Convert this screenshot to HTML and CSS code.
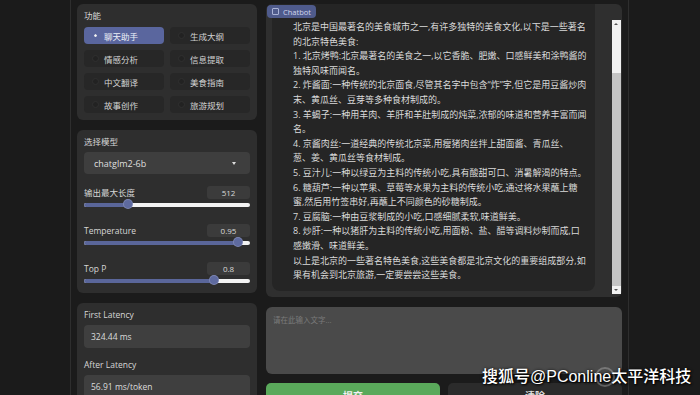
FILE: index.html
```html
<!DOCTYPE html>
<html lang="zh-CN">
<head>
  <meta charset="UTF-8" />
  <meta name="viewport" content="width=device-width, initial-scale=1.0"/>
  <title>ChatGLM2-6B</title>
  <link rel="stylesheet" href="styles.css">
</head>
<body>

  <div class="frame">
    <div class="side">

      <div class="panel">
        <div class="label">功能</div>
        <div class="radio-grid">
          <div class="radio selected"><span class="dot"></span>聊天助手</div>
          <div class="radio"><span class="dot"></span>生成大纲</div>
          <div class="radio"><span class="dot"></span>情感分析</div>
          <div class="radio"><span class="dot"></span>信息提取</div>
          <div class="radio"><span class="dot"></span>中文翻译</div>
          <div class="radio"><span class="dot"></span>美食指南</div>
          <div class="radio"><span class="dot"></span>故事创作</div>
          <div class="radio"><span class="dot"></span>旅游规划</div>
        </div>
      </div>

      <div class="panel model-panel">
        <div class="label">选择模型</div>
        <div class="dropdown">
          <span>chatglm2-6b</span>
          <span class="caret"></span>
        </div>

        <div class="slider-block">
          <div class="field-row">
            <span class="label">输出最大长度</span>
            <span class="num">512</span>
          </div>
          <div class="slider"><div class="fill" style="width: 26.5%"></div></div>
        </div>

        <div class="slider-block">
          <div class="field-row">
            <span class="label">Temperature</span>
            <span class="num">0.95</span>
          </div>
          <div class="slider"><div class="fill" style="width: 93%"></div></div>
        </div>

        <div class="slider-block">
          <div class="field-row">
            <span class="label">Top P</span>
            <span class="num">0.8</span>
          </div>
          <div class="slider"><div class="fill" style="width: 78.5%"></div></div>
        </div>
      </div>

      <div class="panel latency-panel">
        <div class="label">First Latency</div>
        <div class="value-box">324.44 ms</div>
        <div class="label second">After Latency</div>
        <div class="value-box">56.91 ms/token</div>
      </div>

    </div>

    <div class="main">
      <div class="chatbot">
        <div class="chat-tag"><span class="tag-icon"></span>Chatbot</div>
        <div class="messages">
          <div class="bubble">
            <p>北京是中国最著名的美食城市之一,有许多独特的美食文化,以下是一些著名<br>的北京特色美食:</p>
            <p>1. 北京烤鸭:北京最著名的美食之一,以它香脆、肥嫩、口感鲜美和涂鸭酱的<br>独特风味而闻名。</p>
            <p>2. 炸酱面:一种传统的北京面食,尽管其名字中包含“炸”字,但它是用豆酱炒肉<br>末、黄瓜丝、豆芽等多种食材制成的。</p>
            <p>3. 羊蝎子:一种用羊肉、羊肝和羊肚制成的炖菜,浓郁的味道和营养丰富而闻<br>名。</p>
            <p>4. 京酱肉丝:一道经典的传统北京菜,用瘦猪肉丝拌上甜面酱、青瓜丝、<br>葱、姜、黄瓜丝等食材制成。</p>
            <p>5. 豆汁儿:一种以绿豆为主料的传统小吃,具有酸甜可口、消暑解渴的特点。</p>
            <p>6. 糖葫芦:一种以苹果、草莓等水果为主料的传统小吃,通过将水果蘸上糖<br>蜜,然后用竹签串好,再蘸上不同颜色的砂糖制成。</p>
            <p>7. 豆腐脑:一种由豆浆制成的小吃,口感细腻柔软,味道鲜美。</p>
            <p>8. 炒肝:一种以猪肝为主料的传统小吃,用面粉、盐、醋等调料炒制而成,口<br>感嫩滑、味道鲜美。</p>
            <p>以上是北京的一些著名特色美食,这些美食都是北京文化的重要组成部分,如<br>果有机会到北京旅游,一定要尝尝这些美食。</p>
          </div>
        </div>
        <div class="scrollbar">
          <div class="sb-arrow up"></div>
          <div class="sb-track"></div>
          <div class="sb-thumb"></div>
          <div class="sb-arrow down"></div>
        </div>
      </div>

      <textarea class="input" placeholder="请在此输入文字..."></textarea>

      <div class="buttons">
        <button class="submit">提交</button>
        <button class="clear">清除</button>
      </div>
    </div>
  </div>

  <div class="watermark">
    <svg class="wm-logo" width="22" height="22" viewBox="0 0 22 22">
      <circle cx="11" cy="11" r="9" fill="none" stroke="rgba(255,255,255,0.25)" stroke-width="2"/>
    </svg>
    搜狐号@PConline太平洋科技
  </div>

</body>
</html>
```

FILE: styles.css
```css
body {
  margin: 0;
  background: #1b1b1b;
  font-family: "Open Sans", "Noto Sans CJK SC", sans-serif;
  color: #dcdcdc;
  width: 700px;
  height: 395px;
  overflow: hidden;
  position: relative;
}
.frame {
  margin-left: 70px;
  width: 545px;
  height: 395px;
  padding: 4px 6px 0 6px;
  border-left: 1px solid #2e2e2e;
  border-right: 1px solid #2e2e2e;
  display: flex;
  gap: 9px;
  box-sizing: content-box;
}
.side {
  width: 180px;
  flex: none;
  display: flex;
  flex-direction: column;
  gap: 10px;
}
.panel {
  background: #2e2e2e;
  border-radius: 6px;
  padding: 7px 7px 7px 7px;
}
.label {
  font-size: 8.5px;
  line-height: 10px;
  color: #d6d6d6;
}
.radio-grid {
  margin-top: 6px;
  display: grid;
  grid-template-columns: 1fr 1fr;
  gap: 6px;
}
.radio {
  height: 17px;
  background: #272727;
  border-radius: 4px;
  display: flex;
  align-items: center;
  gap: 5px;
  padding-left: 8px;
  font-size: 8.5px;
  color: #d2d2d2;
}
.radio .dot {
  width: 7px;
  height: 7px;
  border-radius: 50%;
  background: #222;
  box-sizing: border-box;
  border: 1px solid #303030;
}
.radio.selected {
  background: #5a669e;
  color: #eef0f8;
}
.radio.selected .dot {
  background: #5a669e;
  border: 2px solid #5a669e;
  box-shadow: inset 0 0 0 2px #f4f4f4;
}
.model-panel {
  padding-bottom: 10px;
}
.dropdown {
  margin-top: 5px;
  height: 22px;
  background: #3e3e3e;
  border-radius: 4px;
  display: flex;
  align-items: center;
  justify-content: space-between;
  padding: 0 14px 0 10px;
  font-size: 9px;
  color: #dedede;
}
.caret {
  width: 0;
  height: 0;
  border-left: 2px solid transparent;
  border-right: 2px solid transparent;
  border-top: 3px solid #ddd;
}
.slider-block {
  margin-top: 12px;
}
.slider-block + .slider-block {
  margin-top: 17px;
}
.field-row {
  display: flex;
  justify-content: space-between;
  align-items: center;
  height: 13px;
}
.num {
  width: 43px;
  height: 13px;
  line-height: 13px;
  background: #3b3b3b;
  border-radius: 3px;
  text-align: center;
  font-size: 8px;
  color: #d8d8d8;
}
.slider {
  margin-top: 4px;
  height: 4px;
  background: #f3f3f3;
  border-radius: 2px;
  position: relative;
}
.fill {
  height: 4px;
  background: #5a669a;
  border-radius: 2px;
  position: relative;
}
.fill::after {
  content: "";
  position: absolute;
  right: -4px;
  top: -3px;
  width: 8px;
  height: 8px;
  border-radius: 50%;
  background: #5e6a9f;
  box-shadow: 0 0 0 1px #7c86b4;
}
.latency-panel {
  flex: 1;
  border-radius: 6px 6px 0 0;
}
.value-box {
  margin-top: 5px;
  height: 23px;
  line-height: 23px;
  background: #3f3f3f;
  border-radius: 4px;
  padding-left: 7px;
  font-size: 8.5px;
  color: #dcdcdc;
}
.label.second {
  margin-top: 12px;
}
.main {
  width: 356px;
  flex: none;
  display: flex;
  flex-direction: column;
}
.chatbot {
  height: 293px;
  flex: none;
  background: #2f2f2f;
  border-radius: 6px;
  position: relative;
  display: flex;
  overflow: hidden;
}
.chat-tag {
  position: absolute;
  left: 1px;
  top: 1px;
  height: 13px;
  padding: 0 5px 0 5px;
  background: #4f5b8c;
  border-radius: 4px;
  display: flex;
  align-items: center;
  gap: 4px;
  font-size: 7.5px;
  color: #cfd5ec;
}
.tag-icon {
  width: 5px;
  height: 5px;
  border: 1px solid #aab3d6;
  border-radius: 1px;
}
.messages {
  flex: 1;
  padding: 0 17px 0 6px;
}
.bubble {
  background: #252525;
  border-radius: 0 0 8px 8px;
  padding: 16px 0 8px 21px;
  font-size: 9px;
  line-height: 14.6px;
  color: #dadada;
  white-space: nowrap;
}
.bubble p {
  margin: 0;
}
.scrollbar {
  width: 9px;
  margin: 16px 1px 3px 0;
  display: flex;
  flex-direction: column;
  background: #c6c6c6;
}
.sb-arrow {
  height: 8px;
  background: #f1f1f1;
  position: relative;
}
.sb-arrow::after {
  content: "";
  position: absolute;
  left: 2px;
  top: 3px;
  border-left: 2.5px solid transparent;
  border-right: 2.5px solid transparent;
}
.sb-arrow.up::after {
  border-bottom: 2px solid #555;
}
.sb-arrow.down::after {
  border-top: 2px solid #555;
}
.sb-track {
  height: 45px;
  background: #f1f1f1;
}
.sb-thumb {
  flex: 1;
  background: #c4c4c4;
}
.input {
  margin-top: 10px;
  height: 67px;
  flex: none;
  background: #4a4a4a;
  border: none;
  border-radius: 6px;
  padding: 7px 7px;
  box-sizing: border-box;
  resize: none;
  font-family: "Open Sans", "Noto Sans CJK SC", sans-serif;
  font-size: 7.5px;
  color: #ddd;
}
.input::placeholder {
  color: #7a7a7a;
}
.buttons {
  margin-top: 9px;
  display: flex;
  gap: 8px;
}
.buttons button {
  flex: 1;
  height: 24px;
  border-radius: 5px;
  font-family: "Open Sans", "Noto Sans CJK SC", sans-serif;
  font-size: 10px;
  font-weight: bold;
  border: none;
  cursor: pointer;
}
.submit {
  background: #5aa95b;
  color: #f2f2f2;
}
.clear {
  background: #2b2b2b;
  color: #dddddd;
}
.watermark {
  position: absolute;
  left: 482px;
  top: 366px;
  font-family: "Liberation Sans", "Noto Sans CJK SC", sans-serif;
  font-size: 16px;
  font-weight: 500;
  line-height: 22px;
  color: #ffffff;
  white-space: nowrap;
  text-shadow: 1px 1px 2px #000, 0 0 3px rgba(0,0,0,0.8);
}
.wm-logo {
  position: absolute;
  left: 112px;
  top: 0;
}
```
